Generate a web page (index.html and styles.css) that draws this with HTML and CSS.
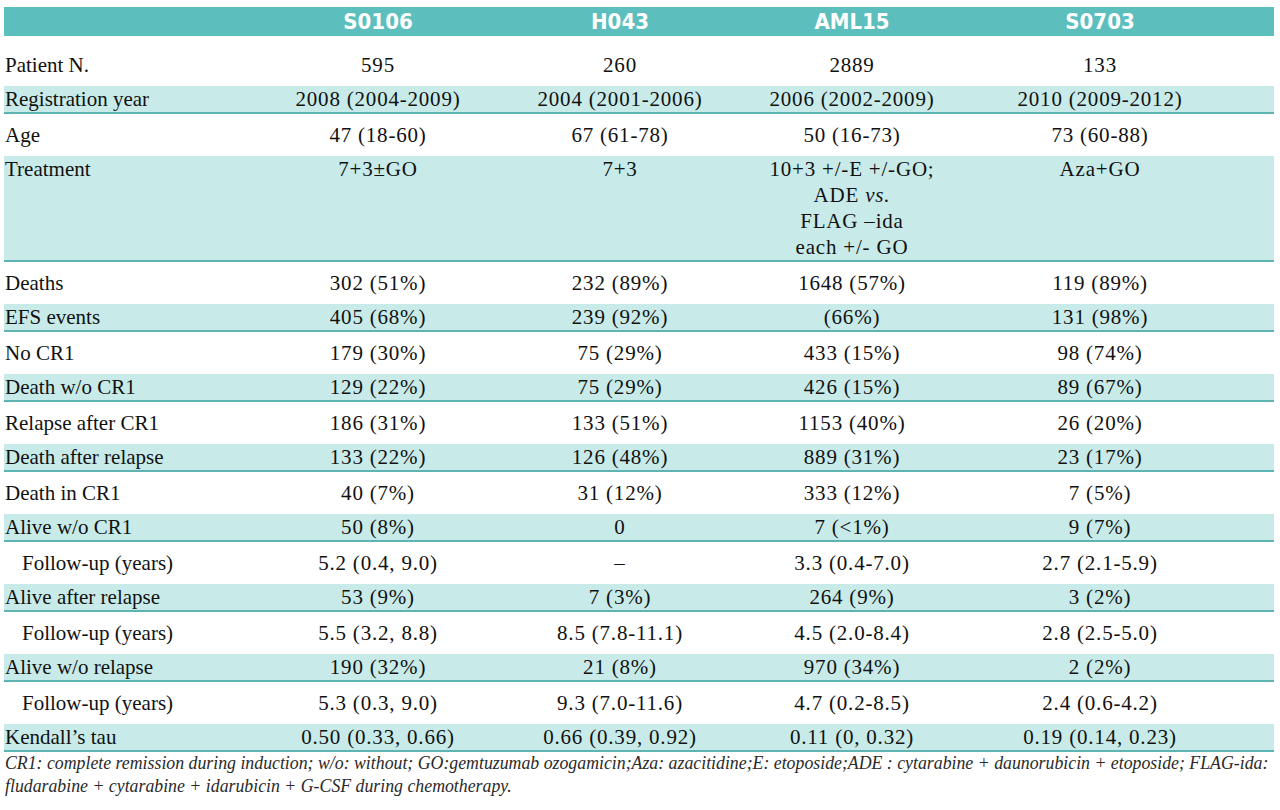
FILE: index.html
```html
<!DOCTYPE html>
<html>
<head>
<meta charset="utf-8">
<link rel="stylesheet" href="styles.css">
</head>
<body>
<div class="table">
  <div class="row head">
    <div class="lbl"></div><div class="c">S0106</div><div class="c">H043</div><div class="c">AML15</div><div class="c">S0703</div>
  </div>
  <div class="row">
    <div class="lbl">Patient N.</div><div class="c">595</div><div class="c">260</div><div class="c">2889</div><div class="c">133</div>
  </div>
  <div class="row alt">
    <div class="lbl">Registration year</div><div class="c">2008 (2004-2009)</div><div class="c">2004 (2001-2006)</div><div class="c">2006 (2002-2009)</div><div class="c">2010 (2009-2012)</div>
  </div>
  <div class="row">
    <div class="lbl">Age</div><div class="c">47 (18-60)</div><div class="c">67 (61-78)</div><div class="c">50 (16-73)</div><div class="c">73 (60-88)</div>
  </div>
  <div class="row alt">
    <div class="lbl">Treatment</div><div class="c">7+3±GO</div><div class="c">7+3</div><div class="c">10+3 +/-E +/-GO;<br>ADE <i>vs.</i><br>FLAG –ida<br>each +/- GO</div><div class="c">Aza+GO</div>
  </div>
  <div class="row">
    <div class="lbl">Deaths</div><div class="c">302 (51%)</div><div class="c">232 (89%)</div><div class="c">1648 (57%)</div><div class="c">119 (89%)</div>
  </div>
  <div class="row alt">
    <div class="lbl">EFS events</div><div class="c">405 (68%)</div><div class="c">239 (92%)</div><div class="c">(66%)</div><div class="c">131 (98%)</div>
  </div>
  <div class="row">
    <div class="lbl">No CR1</div><div class="c">179 (30%)</div><div class="c">75 (29%)</div><div class="c">433 (15%)</div><div class="c">98 (74%)</div>
  </div>
  <div class="row alt">
    <div class="lbl">Death w/o CR1</div><div class="c">129 (22%)</div><div class="c">75 (29%)</div><div class="c">426 (15%)</div><div class="c">89 (67%)</div>
  </div>
  <div class="row">
    <div class="lbl">Relapse after CR1</div><div class="c">186 (31%)</div><div class="c">133 (51%)</div><div class="c">1153 (40%)</div><div class="c">26 (20%)</div>
  </div>
  <div class="row alt">
    <div class="lbl">Death after relapse</div><div class="c">133 (22%)</div><div class="c">126 (48%)</div><div class="c">889 (31%)</div><div class="c">23 (17%)</div>
  </div>
  <div class="row">
    <div class="lbl">Death in CR1</div><div class="c">40 (7%)</div><div class="c">31 (12%)</div><div class="c">333 (12%)</div><div class="c">7 (5%)</div>
  </div>
  <div class="row alt">
    <div class="lbl">Alive w/o CR1</div><div class="c">50 (8%)</div><div class="c">0</div><div class="c">7 (&lt;1%)</div><div class="c">9 (7%)</div>
  </div>
  <div class="row">
    <div class="lbl sub">Follow-up (years)</div><div class="c">5.2 (0.4, 9.0)</div><div class="c">–</div><div class="c">3.3 (0.4-7.0)</div><div class="c">2.7 (2.1-5.9)</div>
  </div>
  <div class="row alt">
    <div class="lbl">Alive after relapse</div><div class="c">53 (9%)</div><div class="c">7 (3%)</div><div class="c">264 (9%)</div><div class="c">3 (2%)</div>
  </div>
  <div class="row">
    <div class="lbl sub">Follow-up (years)</div><div class="c">5.5 (3.2, 8.8)</div><div class="c">8.5 (7.8-11.1)</div><div class="c">4.5 (2.0-8.4)</div><div class="c">2.8 (2.5-5.0)</div>
  </div>
  <div class="row alt">
    <div class="lbl">Alive w/o relapse</div><div class="c">190 (32%)</div><div class="c">21 (8%)</div><div class="c">970 (34%)</div><div class="c">2 (2%)</div>
  </div>
  <div class="row">
    <div class="lbl sub">Follow-up (years)</div><div class="c">5.3 (0.3, 9.0)</div><div class="c">9.3 (7.0-11.6)</div><div class="c">4.7 (0.2-8.5)</div><div class="c">2.4 (0.6-4.2)</div>
  </div>
  <div class="row alt">
    <div class="lbl">Kendall’s tau</div><div class="c">0.50 (0.33, 0.66)</div><div class="c">0.66 (0.39, 0.92)</div><div class="c">0.11 (0, 0.32)</div><div class="c">0.19 (0.14, 0.23)</div>
  </div>
</div>
<p class="note">CR1: complete remission during induction; w/o: without; GO:gemtuzumab ozogamicin;Aza: azacitidine;E: etoposide;ADE : cytarabine + daunorubicin + etoposide; FLAG-ida:<br>fludarabine + cytarabine + idarubicin + G-CSF during chemotherapy.</p>
</body>
</html>
```
FILE: styles.css
```css
html, body {
  margin: 0;
  padding: 0;
  background: #ffffff;
}

body {
  font-family: "Liberation Serif", "Times New Roman", serif;
  color: #111111;
}

.table {
  width: 1270px;
  margin: 7px 0 0 4px;
}

.row {
  display: grid;
  grid-template-columns: 253px 242px 242px 222px 274px 1fr;
  font-size: 21px;
  line-height: 26px;
  padding: 8px 0;
}

.row .lbl {
  padding-left: 1px;
  white-space: nowrap;
}

.row .lbl.sub {
  padding-left: 18px;
}

.row .c {
  text-align: center;
  white-space: nowrap;
  letter-spacing: 0.8px;
}

.head {
  background: #5cbfbe;
  color: #ffffff;
  font-family: "DejaVu Sans Condensed", "Liberation Sans", sans-serif;
  font-weight: bold;
  font-size: 22px;
  line-height: 29px;
  height: 29px;
  padding: 0;
  margin-bottom: 8px;
}

.head .c {
  letter-spacing: 0;
}

.alt {
  background: #c8ebea;
  padding: 0;
  border-bottom: 2px solid #5db4b3;
}

.note {
  margin: 0 0 0 5px;
  font-style: italic;
  font-size: 17.8px;
  line-height: 23px;
  color: #2a2a2a;
  white-space: nowrap;
}
```
